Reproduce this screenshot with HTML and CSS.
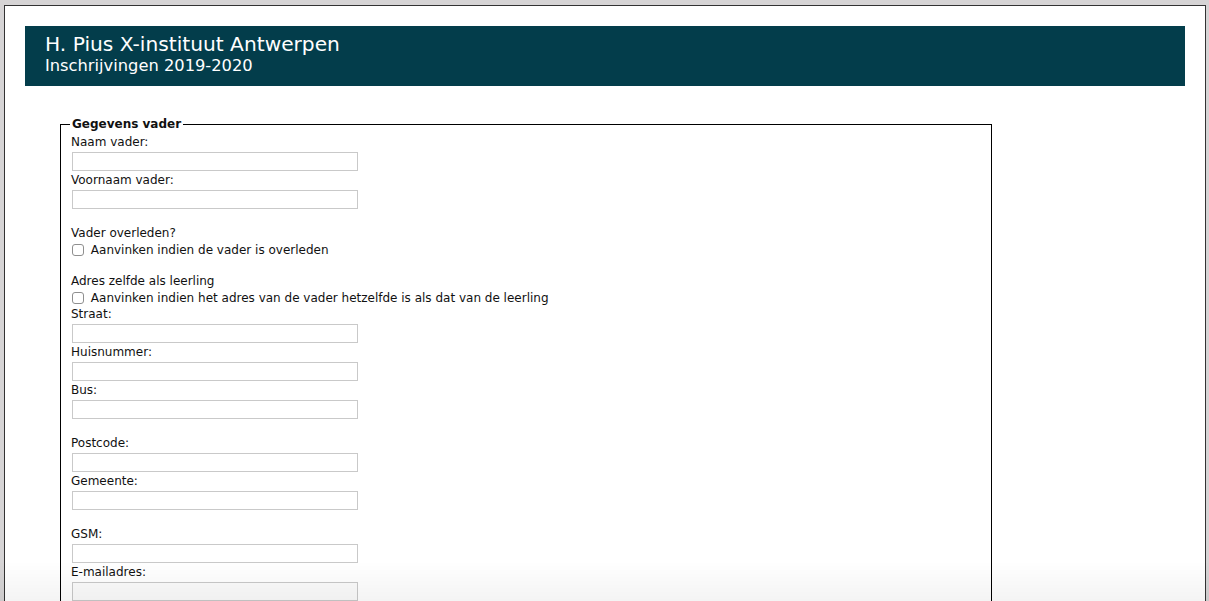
FILE: index.html
```html
<!DOCTYPE html>
<html lang="nl">
<head>
  <meta charset="UTF-8">
  <meta name="viewport" content="width=device-width, initial-scale=1.0">
  <title>Inschrijvingen 2019-2020</title>
  <link rel="stylesheet" href="styles.css">
</head>
<body>
<div class="page">
  <div class="header">
    <div class="title">H. Pius X-instituut Antwerpen</div>
    <div class="subtitle">Inschrijvingen 2019-2020</div>
  </div>

  <form class="form">
    <fieldset class="group">
      <legend>Gegevens vader</legend>

      <div class="field">
        <label for="naam">Naam vader:</label>
        <input type="text" id="naam" class="text">
      </div>
      <div class="field">
        <label for="voornaam">Voornaam vader:</label>
        <input type="text" id="voornaam" class="text">
      </div>

      <div class="spacer"></div>
      <div class="label">Vader overleden?</div>
      <label class="check"><input type="checkbox" class="box"> Aanvinken indien de vader is overleden</label>

      <div class="spacer"></div>
      <div class="label">Adres zelfde als leerling</div>
      <label class="check"><input type="checkbox" class="box"> Aanvinken indien het adres van de vader hetzelfde is als dat van de leerling</label>

      <div class="field">
        <label for="straat">Straat:</label>
        <input type="text" id="straat" class="text">
      </div>
      <div class="field">
        <label for="huisnummer">Huisnummer:</label>
        <input type="text" id="huisnummer" class="text">
      </div>
      <div class="field">
        <label for="bus">Bus:</label>
        <input type="text" id="bus" class="text">
      </div>

      <div class="spacer"></div>
      <div class="field">
        <label for="postcode">Postcode:</label>
        <input type="text" id="postcode" class="text">
      </div>
      <div class="field">
        <label for="gemeente">Gemeente:</label>
        <input type="text" id="gemeente" class="text">
      </div>

      <div class="spacer"></div>
      <div class="field">
        <label for="gsm">GSM:</label>
        <input type="text" id="gsm" class="text">
      </div>
      <div class="field">
        <label for="email">E-mailadres:</label>
        <input type="text" id="email" class="text" disabled>
      </div>
      <div class="spacer"></div>
    </fieldset>
  </form>
</div>

<!-- schaduw onderaan het venster -->
<div class="fade"></div>
</body>
</html>
```

FILE: styles.css
```css
* {
    box-sizing: border-box;
}

body {
    margin: 0;
    padding: 5px 0 0 4px;
    background-color: #d6d4d5;
    font-family: "DejaVu Sans", Verdana, sans-serif;
    font-size: 12px;
    color: #111;
}

.page {
    width: 1202px;
    min-height: 700px;
    background-color: #fff;
    border: 1px solid #333;
    padding: 20px;
}

.header {
    height: 60px;
    background-color: #033d4b;
    color: #fff;
    padding: 7px 20px 0 20px;
}

.title {
    font-size: 20.2px;
    line-height: 23px;
}

.subtitle {
    font-size: 16.3px;
    line-height: 19px;
}

.form {
    padding: 31px 0 0 35px;
}

.group {
    width: 932px;
    margin: 0;
    border: 1px solid #000;
    padding: 3px 9px 8px 10px;
}

.group legend {
    font-weight: bold;
    font-size: 12px;
    line-height: 14px;
    padding: 0 2px;
    margin-left: -1px;
}

.field label,
.label {
    display: block;
    line-height: 17px;
}

.text {
    display: block;
    width: 286px;
    height: 19px;
    margin: 1px 0 1px 1px;
    border: 1px solid #c9c9c9;
    background-color: #fff;
    font: inherit;
}

.text:disabled {
    background-color: #fbfbfb;
}

.spacer {
    height: 15px;
}

.check {
    display: flex;
    align-items: center;
    height: 16px;
    line-height: 16px;
    white-space: pre;
}

.box {
    -webkit-appearance: none;
    appearance: none;
    width: 12px;
    height: 12px;
    margin: 0 3px 0 1px;
    border: 1px solid #8f8f8f;
    border-radius: 3px;
    background-color: #fff;
}

.fade {
    position: fixed;
    left: 0;
    right: 0;
    bottom: 0;
    height: 40px;
    background: linear-gradient(rgba(0,0,0,0), rgba(0,0,0,0.045));
    pointer-events: none;
}
```
